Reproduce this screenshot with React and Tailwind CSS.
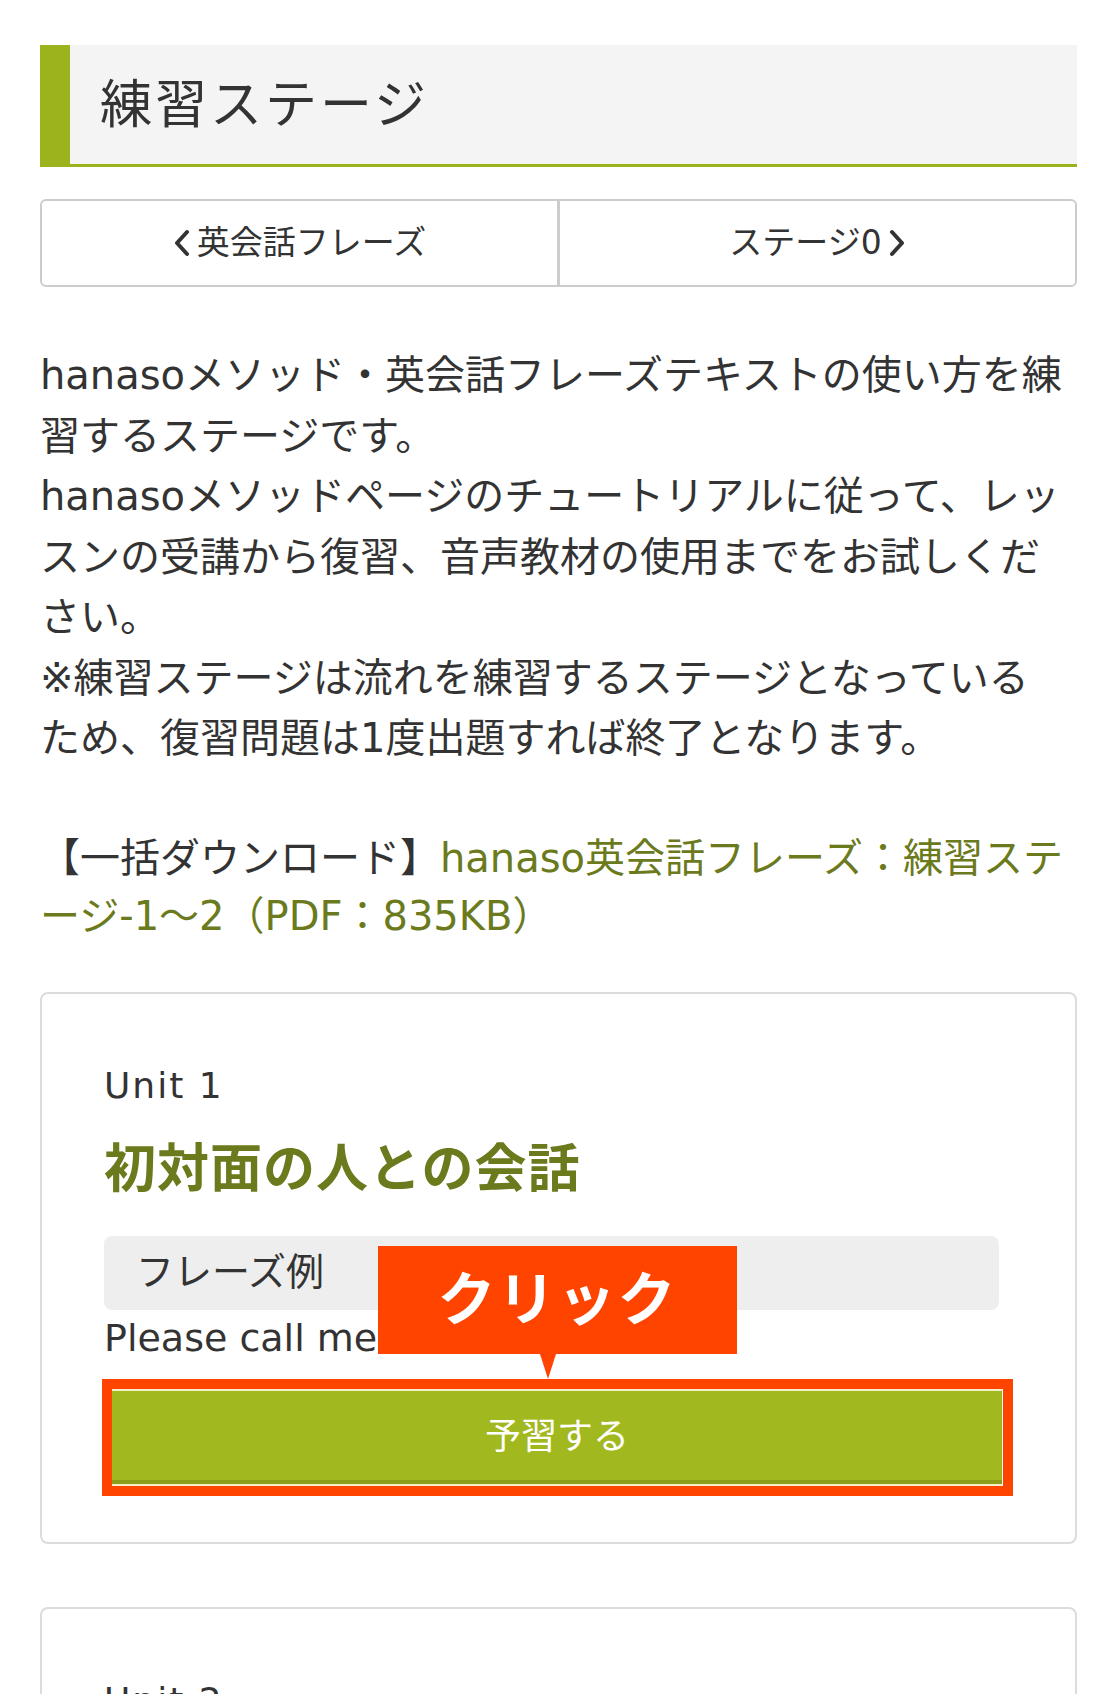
import React from 'react';

const FONT = "font-['DejaVu_Sans','Noto_Sans_CJK_JP',sans-serif]";

function Chevron({ dir }) {
  return (
    <svg width="18" height="28" viewBox="0 0 18 28" className="shrink-0">
      <polyline
        points={dir === 'left' ? '14,3 4,14 14,25' : '4,3 14,14 4,25'}
        fill="none"
        stroke="#333"
        strokeWidth="4"
        strokeLinecap="round"
        strokeLinejoin="round"
      />
    </svg>
  );
}

function UnitCard({ unit, title, phrase, callout, className = '' }) {
  return (
    <div className={`relative rounded-lg border-2 border-[#dcdcdc] bg-white pl-[62px] pr-[76px] pt-[68px] pb-[56px] ${className}`}>
      <div className="text-[36px] leading-[48px] tracking-[2px] text-[#333]">Unit {unit}</div>
      <h3 className="mt-[24px] text-[52px] font-bold leading-[70px] tracking-[1px] text-[#6b7a1c]">{title}</h3>
      <div className="mt-[32px] flex h-[74px] items-center rounded-lg bg-[#eeeeee] pl-[32px] text-[38px] text-[#333]">
        フレーズ例
      </div>
      <div className="mt-[4px] text-[38px] leading-[48px] text-[#333]">{phrase}</div>

      <div className="relative mt-[27px] ml-[8px] w-[890px]">
        <button className="flex h-[97px] w-full items-center justify-center border-y-2 border-[#f4efc8] bg-[#a2b81f] text-[36px] text-white shadow-[inset_0_-4px_0_#8c9d1a]">
          予習する
        </button>
        {callout && (
          <div className="pointer-events-none absolute -top-[10px] -left-[10px] -right-[11px] -bottom-[10px] border-[10px] border-[#ff4400]" />
        )}
      </div>

      {callout && (
        <div className="absolute left-[336px] top-[252px] z-10 flex h-[108px] w-[359px] items-center justify-center bg-[#ff4400]">
          <span className="text-[58px] font-bold leading-none tracking-[2px] text-white">クリック</span>
          <div className="absolute left-[162px] top-[108px] h-0 w-0 border-x-[8px] border-t-[25px] border-x-transparent border-t-[#ff4400]" />
        </div>
      )}
    </div>
  );
}

export default function App() {
  return (
    <div className={`min-h-screen bg-white pt-[45px] pl-[40px] pr-[30px] pb-10 text-[#333] ${FONT}`}>
      {/* Page heading */}
      <h2 className="flex h-[122px] items-center border-b-[3px] border-l-[30px] border-[#9db31e] bg-[#f4f4f4] pl-[30px] text-[52px] font-normal tracking-[3px] text-[#333]">
        練習ステージ
      </h2>

      {/* Prev / next */}
      <div className="mt-[32px] flex h-[88px] rounded-md border-2 border-[#cccccc]">
        <a className="flex flex-1 items-center justify-center gap-[6px] text-[33px] text-[#333]">
          <Chevron dir="left" />
          <span>英会話フレーズ</span>
        </a>
        <div className="w-[3px] bg-[#cccccc]" />
        <a className="flex flex-1 items-center justify-center gap-[6px] text-[33px] text-[#333]">
          <span>ステージ0</span>
          <Chevron dir="right" />
        </a>
      </div>

      {/* Intro */}
      <p className="mt-[58px] text-[40px] leading-[60.5px] text-[#333]">
        hanasoメソッド・英会話フレーズテキストの使い方を練<br />
        習するステージです。<br />
        hanasoメソッドページのチュートリアルに従って、レッ<br />
        スンの受講から復習、音声教材の使用までをお試しくだ<br />
        さい。<br />
        ※練習ステージは流れを練習するステージとなっている<br />
        ため、復習問題は1度出題すれば終了となります。
      </p>

      {/* Download */}
      <p className="mt-[60px] text-[40px] leading-[58px] text-[#333]">
        【一括ダウンロード】<a className="text-[#6b7a1c]">hanaso英会話フレーズ：練習ステ<br />
        ージ-1〜2（PDF：835KB）</a>
      </p>

      <UnitCard
        className="mt-[47px]"
        unit={1}
        title="初対面の人との会話"
        phrase="Please call me Ken."
        callout
      />

      <UnitCard
        className="mt-[63px]"
        unit={2}
        title="自己紹介をする"
        phrase="I'm from Tokyo."
      />
    </div>
  );
}
